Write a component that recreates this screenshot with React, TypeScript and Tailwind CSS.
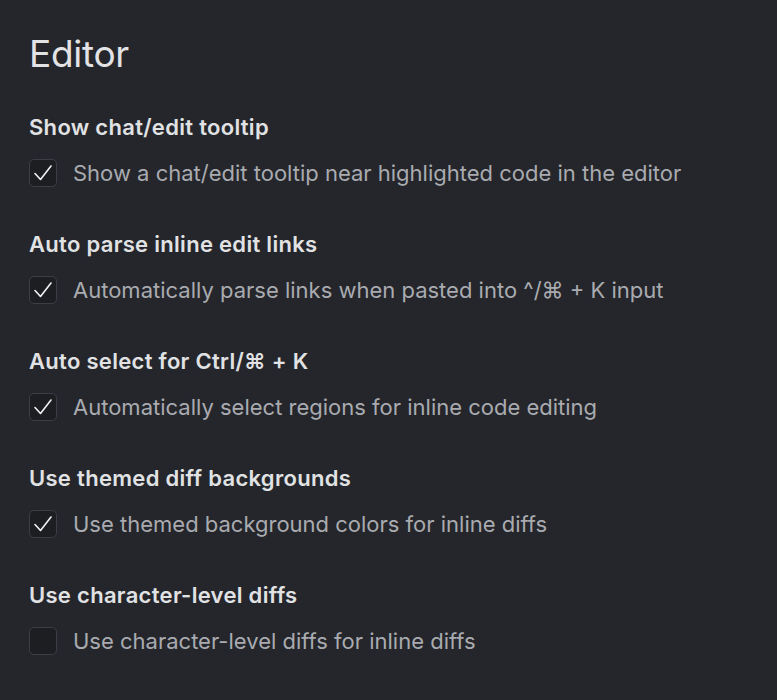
import { useState } from 'react';

const settings = [
  { title: 'Show chat/edit tooltip', desc: 'Show a chat/edit tooltip near highlighted code in the editor', on: true },
  { title: 'Auto parse inline edit links', desc: 'Automatically parse links when pasted into ^/⌘ + K input', on: true },
  { title: 'Auto select for Ctrl/⌘ + K', desc: 'Automatically select regions for inline code editing', on: true },
  { title: 'Use themed diff backgrounds', desc: 'Use themed background colors for inline diffs', on: true },
  { title: 'Use character-level diffs', desc: 'Use character-level diffs for inline diffs', on: false },
];

function Check({ checked, onToggle }: { checked: boolean; onToggle: () => void }) {
  return (
    <button
      type="button"
      onClick={onToggle}
      className="w-[28px] h-[28px] shrink-0 rounded-[5px] border border-[#3b3e45] bg-[#1c1e22] flex items-center justify-center"
    >
      {checked && (
        <svg width="24" height="24" viewBox="0 0 24 24" fill="none">
          <path d="M4 12.5 L9.5 18.5 L20 5" stroke="#f2f2f2" strokeWidth="1.6" strokeLinecap="round" strokeLinejoin="round" />
        </svg>
      )}
    </button>
  );
}

export default function App() {
  const [values, setValues] = useState(settings.map((s) => s.on));
  return (
    <div className="min-h-[700px] bg-[#24262b] px-[29px] pt-[30px] font-['Inter',sans-serif]">
      <h1 className="text-[37px] leading-[48px] text-[#e3e3e5] font-normal tracking-[-0.3px]">Editor</h1>
      <div className="mt-[35px] flex flex-col gap-[43px]">
        {settings.map((s, i) => (
          <div key={s.title} className="flex flex-col gap-[18px]">
            <div className="text-[22px] leading-[28px] font-semibold tracking-[0.3px] text-[#e1e2e4]">{s.title}</div>
            <div className="flex items-center gap-[16px]">
              <Check checked={values[i]} onToggle={() => setValues(values.map((v, j) => (j === i ? !v : v)))} />
              <span className="text-[22px] leading-[28px] text-[#a9abb0]">{s.desc}</span>
            </div>
          </div>
        ))}
      </div>
    </div>
  );
}
